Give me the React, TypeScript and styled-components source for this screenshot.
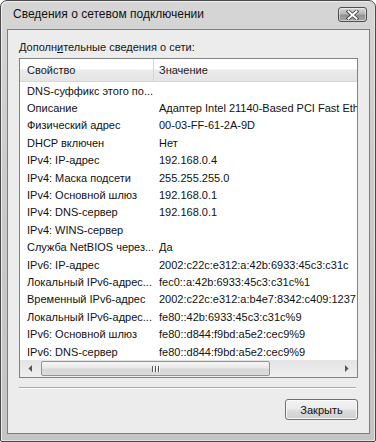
import styled, { createGlobalStyle } from "styled-components";

const GlobalStyle = createGlobalStyle`
  html, body {
    margin: 0;
    padding: 0;
    background: #ffffff;
  }
  body {
    font-family: "Liberation Sans", Arial, sans-serif;
  }
`;

const Window = styled.div`
  box-sizing: border-box;
  width: 376px;
  height: 442px;
  display: flex;
  flex-direction: column;
  border: 1px solid #4a4a4a;
  border-radius: 7px 7px 2px 2px;
  background: linear-gradient(180deg, #d6d6d6 0%, #cbcbcb 40%, #c4c4c4 100%);
  box-shadow: inset 1px 1px 0 #eeeeee, inset -1px -1px 0 #e2e2e2;
  padding: 0 5px 7px 6px;
  overflow: hidden;
`;

const TitleBar = styled.div`
  height: 28px;
  display: flex;
  align-items: center;
  justify-content: space-between;
  padding: 0 3px 0 6px;
  flex-shrink: 0;
`;

const Title = styled.span`
  font-size: 12px;
  color: #111111;
  margin-top: -2px;
`;

const CloseButton = styled.div`
  box-sizing: border-box;
  width: 29px;
  height: 15px;
  margin-top: -1px;
  border: 1px solid #4f4f4f;
  border-radius: 3px;
  background: linear-gradient(180deg, #d6d6d6 0%, #b8b8b8 45%, #929292 55%, #a8a8a8 100%);
  box-shadow: inset 0 0 0 1px rgba(255, 255, 255, 0.45);
  display: flex;
  align-items: center;
  justify-content: center;
`;

const Client = styled.div`
  flex: 1;
  display: flex;
  flex-direction: column;
  border: 1px solid #7e7e7e;
  background: #ececec;
  padding: 11px 11px 13px 11px;
`;

const Caption = styled.div`
  font-size: 11px;
  color: #151515;
  line-height: 13px;
  margin-bottom: 4px;

  u {
    text-decoration: underline;
    text-underline-offset: 1px;
  }
`;

const ListBox = styled.div`
  box-sizing: border-box;
  height: 320px;
  border: 1px solid #828282;
  background: #ffffff;
  display: flex;
  flex-direction: column;
  overflow: hidden;
`;

const Header = styled.div`
  height: 22px;
  display: grid;
  grid-template-columns: 133px 1fr;
  background: linear-gradient(180deg, #ffffff 0%, #ffffff 45%, #ebebeb 50%, #e4e4e4 100%);
  border-bottom: 1px solid #d8d8d8;
  flex-shrink: 0;
`;

const HeaderCell = styled.div<{ $divider?: boolean }>`
  display: flex;
  align-items: center;
  font-size: 11px;
  color: #1a1a1a;
  padding-left: ${({ $divider }) => ($divider ? "5px" : "7px")};
  border-left: ${({ $divider }) => ($divider ? "1px solid #d6d6d6" : "none")};
`;

const Rows = styled.div`
  flex: 1;
  overflow: hidden;
`;

const Row = styled.div`
  height: 17.4px;
  display: grid;
  grid-template-columns: 133px 1fr;
  align-items: center;
  font-size: 11px;
  color: #111111;
  white-space: nowrap;
`;

const Cell = styled.div<{ $value?: boolean }>`
  overflow: hidden;
  padding-left: ${({ $value }) => ($value ? "6px" : "7px")};
`;

const HScroll = styled.div`
  height: 17px;
  flex-shrink: 0;
  display: flex;
  align-items: center;
  background: linear-gradient(180deg, #e4e4e4 0%, #efefef 100%);
  padding: 0 2px;
  gap: 2px;
`;

const Arrow = styled.div`
  width: 17px;
  height: 17px;
  display: flex;
  align-items: center;
  justify-content: center;
  flex-shrink: 0;
`;

const Track = styled.div`
  flex: 1;
  display: flex;
  height: 15px;
`;

const Thumb = styled.div<{ $width: number }>`
  box-sizing: border-box;
  width: ${({ $width }) => $width}px;
  height: 15px;
  border: 1px solid #939393;
  border-radius: 2px;
  background: linear-gradient(180deg, #f6f6f6 0%, #e8e8e8 45%, #d8d8d8 55%, #dcdcdc 100%);
  display: flex;
  align-items: center;
  justify-content: center;
  gap: 2px;
`;

const Grip = styled.span`
  width: 1px;
  height: 6px;
  background: #555555;
  box-shadow: 1px 0 0 #ffffff;
`;

const Separator = styled.div`
  height: 1px;
  background: #a8a8a8;
  border-bottom: 1px solid #ffffff;
  margin: 9px 2px 0 0;
`;

const Footer = styled.div`
  display: flex;
  justify-content: flex-end;
  margin-top: 10px;
`;

const Button = styled.button`
  box-sizing: border-box;
  width: 73px;
  height: 21px;
  border: 1px solid #707070;
  border-radius: 3px;
  background: linear-gradient(180deg, #f2f2f2 0%, #ebebeb 48%, #dddddd 52%, #cfcfcf 100%);
  box-shadow: inset 0 0 0 1px #fafafa;
  font-family: "Liberation Sans", Arial, sans-serif;
  font-size: 11px;
  color: #111111;
  padding: 0;
`;

const rows: [string, string][] = [
  ["DNS-суффикс этого по...", ""],
  ["Описание", "Адаптер Intel 21140-Based PCI Fast Eth"],
  ["Физический адрес", "00-03-FF-61-2A-9D"],
  ["DHCP включен", "Нет"],
  ["IPv4: IP-адрес", "192.168.0.4"],
  ["IPv4: Маска подсети", "255.255.255.0"],
  ["IPv4: Основной шлюз", "192.168.0.1"],
  ["IPv4: DNS-сервер", "192.168.0.1"],
  ["IPv4: WINS-сервер", ""],
  ["Служба NetBIOS через...", "Да"],
  ["IPv6: IP-адрес", "2002:c22c:e312:a:42b:6933:45c3:c31c"],
  ["Локальный IPv6-адрес...", "fec0::a:42b:6933:45c3:c31c%1"],
  ["Временный IPv6-адрес", "2002:c22c:e312:a:b4e7:8342:c409:1237"],
  ["Локальный IPv6-адрес...", "fe80::42b:6933:45c3:c31c%9"],
  ["IPv6: Основной шлюз", "fe80::d844:f9bd:a5e2:cec9%9"],
  ["IPv6: DNS-сервер", "fe80::d844:f9bd:a5e2:cec9%9"],
];

function CloseIcon() {
  return (
    <svg width="13" height="10" viewBox="0 0 13 10">
      <path d="M2.5 1.5 L10.5 8.5 M10.5 1.5 L2.5 8.5" stroke="#3a3a3a" strokeWidth="3.6" strokeLinecap="square" />
      <path d="M2.5 1.5 L10.5 8.5 M10.5 1.5 L2.5 8.5" stroke="#ffffff" strokeWidth="2" strokeLinecap="square" />
    </svg>
  );
}

function ArrowIcon({ dir }: { dir: "left" | "right" }) {
  return (
    <svg width="5" height="7" viewBox="0 0 5 7">
      <path d={dir === "left" ? "M4 0 L0.5 3.5 L4 7 Z" : "M1 0 L4.5 3.5 L1 7 Z"} fill="#555555" />
    </svg>
  );
}

export default function App() {
  return (
    <>
      <GlobalStyle />
      <Window>
        <TitleBar>
          <Title>Сведения о сетевом подключении</Title>
          <CloseButton>
            <CloseIcon />
          </CloseButton>
        </TitleBar>
        <Client>
          <Caption>
            Дополн<u>и</u>тельные сведения о сети:
          </Caption>
          <ListBox>
            <Header>
              <HeaderCell>Свойство</HeaderCell>
              <HeaderCell $divider>Значение</HeaderCell>
            </Header>
            <Rows>
              {rows.map(([name, value], i) => (
                <Row key={i}>
                  <Cell>{name}</Cell>
                  <Cell $value>{value}</Cell>
                </Row>
              ))}
            </Rows>
            <HScroll>
              <Arrow>
                <ArrowIcon dir="left" />
              </Arrow>
              <Track>
                <Thumb $width={229}>
                  <Grip />
                  <Grip />
                  <Grip />
                </Thumb>
              </Track>
              <Arrow>
                <ArrowIcon dir="right" />
              </Arrow>
            </HScroll>
          </ListBox>
          <Separator />
          <Footer>
            <Button>Закрыть</Button>
          </Footer>
        </Client>
      </Window>
    </>
  );
}
